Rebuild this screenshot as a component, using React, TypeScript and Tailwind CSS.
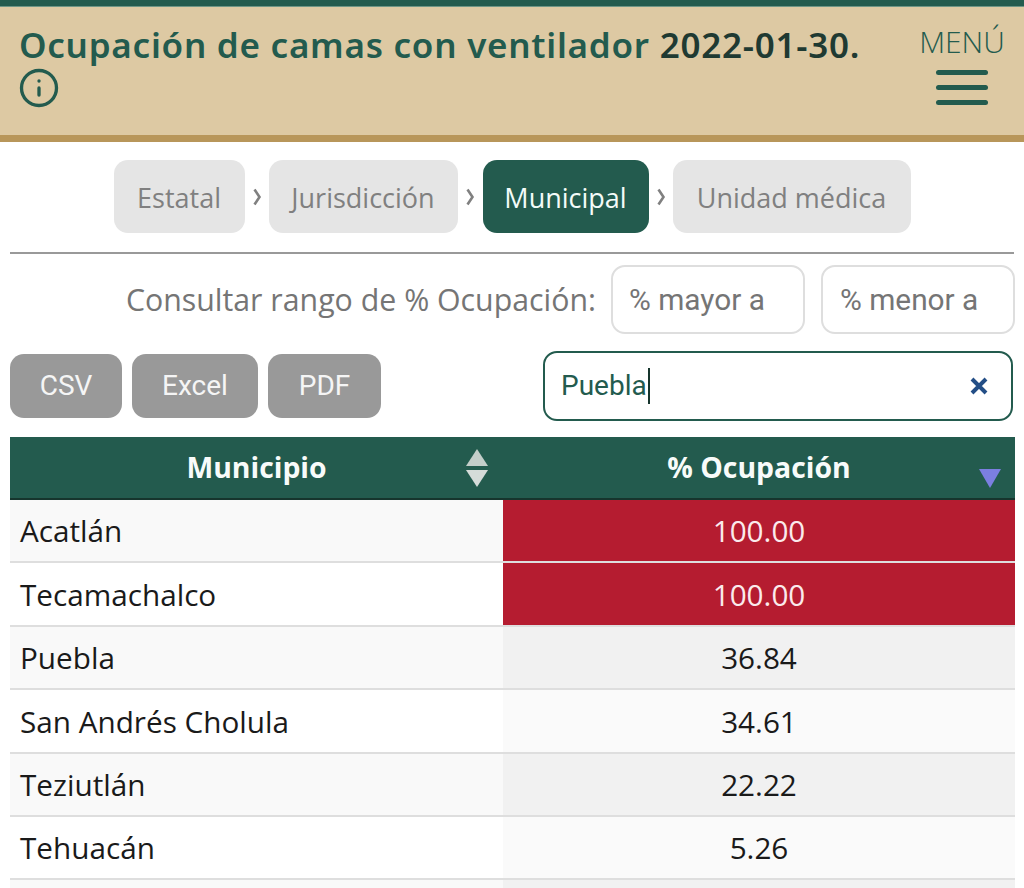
import { Info } from "lucide-react";

const rows = [
  { name: "Acatlán", value: "100.00", high: true },
  { name: "Tecamachalco", value: "100.00", high: true },
  { name: "Puebla", value: "36.84", high: false },
  { name: "San Andrés Cholula", value: "34.61", high: false },
  { name: "Teziutlán", value: "22.22", high: false },
  { name: "Tehuacán", value: "5.26", high: false },
  { name: "", value: "", high: false },
];

function Step({ label, active, width }: { label: string; active?: boolean; width: string }) {
  return (
    <div
      className={
        active
          ? `flex h-[73px] items-center justify-center rounded-[14px] bg-[#235b4e] pt-[3px] text-[#f4fbf8] ${width}`
          : `flex h-[73px] items-center justify-center rounded-[14px] bg-[#e5e5e5] pt-[3px] text-[#808080] ${width}`
      }
    >
      {label}
    </div>
  );
}

function Chevron({ wide }: { wide?: boolean }) {
  return (
    <svg className={wide ? "mr-[7px] ml-[6px] h-[20px] w-[12px] text-[#808080]" : "mx-[6px] h-[20px] w-[12px] text-[#808080]"} viewBox="0 0 12 20" fill="none">
      <path d="M3.5 2.5l5 7.5-5 7.5" stroke="currentColor" strokeWidth="2.6" />
    </svg>
  );
}

function ExportButton({ label, width }: { label: string; width: string }) {
  return (
    <div className={`flex h-[64px] items-center justify-center rounded-[14px] bg-[#999999] text-[28px] text-[#f5f5f5] ${width}`}>
      {label}
    </div>
  );
}

function SortArrows() {
  return (
    <svg className="h-[40px] w-[24px]" viewBox="0 0 24 40">
      <path d="M12 1l11 17H1z" fill="#c3cec9" />
      <path d="M12 39L1 22h22z" fill="#d5dcd9" />
    </svg>
  );
}

export default function App() {
  return (
    <div className="h-[888px] w-[1024px] overflow-hidden bg-white font-['Open_Sans',sans-serif]">
      <div className="h-[7px] border-b border-[#6d9586] bg-[#235b4e]" />
      <header className="flex h-[135px] border-b-[7px] border-[#b8965a] bg-[#ddc9a3] pr-[17px] pl-[19px]">
        <div className="w-[860px] pt-[16px]">
          <h1 className="text-[35px] leading-[44px] font-semibold tracking-[0.75px] whitespace-nowrap text-[#235b4e] font-['Noto_Sans',sans-serif]">
            Ocupación de camas con ventilador <span className="text-[#1f3a32]">2022-01-30.</span>
          </h1>
          <Info className="-ml-[1px] h-[42px] w-[42px] text-[#235b4e]" strokeWidth={1.9} />
        </div>
        <div className="ml-auto flex w-[90px] flex-col items-center pt-[18px]">
          <span className="text-[30px] leading-[34px] font-light text-[#235b4e]">MENÚ</span>
          <div className="mt-[11px] flex w-[52px] flex-col gap-[10px]">
            <div className="h-[5px] rounded-full bg-[#235b4e]" />
            <div className="h-[5px] rounded-full bg-[#235b4e]" />
            <div className="h-[5px] rounded-full bg-[#235b4e]" />
          </div>
        </div>
      </header>

      <div className="mx-[10px] flex h-[112px] items-start justify-center border-b-2 border-[#999999] pt-[18px] text-[27px]">
        <div className="flex items-center">
          <Step label="Estatal" width="w-[131px]" />
          <Chevron />
          <Step label="Jurisdicción" width="w-[189px]" />
          <Chevron wide />
          <Step label="Municipal" width="w-[166px]" active />
          <Chevron />
          <Step label="Unidad médica" width="w-[238px]" />
        </div>
      </div>

      <div className="mt-[11px] flex items-center justify-end pr-[9px]">
        <span className="mr-[15px] text-[30.3px] text-[#757575]">Consultar rango de % Ocupación:</span>
        <div className="flex h-[69px] w-[194px] items-center rounded-[14px] border-2 border-[#dedede] pt-[1px] pl-[16px] text-[29.8px] text-[#757575] font-['Roboto',sans-serif]">
          % mayor a
        </div>
        <div className="ml-[16px] flex h-[69px] w-[194px] items-center rounded-[14px] border-2 border-[#dedede] pt-[1px] pl-[17px] text-[29.8px] text-[#757575] font-['Roboto',sans-serif]">
          % menor a
        </div>
      </div>

      <div className="mt-[17px] flex items-center pr-[11px] pl-[10px] font-['Roboto',sans-serif]">
        <div className="flex gap-[10px]">
          <ExportButton label="CSV" width="w-[112px]" />
          <ExportButton label="Excel" width="w-[126px]" />
          <ExportButton label="PDF" width="w-[113px]" />
        </div>
        <div className="ml-auto flex h-[70px] w-[470px] items-center rounded-[14px] border-2 border-[#235b4e] pr-[22px] pl-[16px] text-[28px] text-[#235b4e]">
          <span>Puebla</span>
          <span className="ml-[1px] h-[36px] w-[2px] bg-[#16352d]" />
          <svg className="ml-auto h-[20px] w-[20px]" viewBox="0 0 20 20" fill="none">
            <path d="M3 3l14 14M17 3L3 17" stroke="#234e86" strokeWidth="4" />
          </svg>
        </div>
      </div>

      <div className="mt-[16px] mr-[9px] ml-[10px]">
        <div className="flex h-[63px] border-b-2 border-[#16352d] bg-[#235b4e] text-[28.4px] font-bold text-[#f8fbfa]">
          <div className="relative flex w-[493px] items-center justify-center">
            <span>Municipio</span>
            <div className="absolute top-[11px] right-[14px]">
              <SortArrows />
            </div>
          </div>
          <div className="relative flex flex-1 items-center justify-center">
            <span>% Ocupación</span>
            <svg className="absolute right-[14px] bottom-[10px] h-[20px] w-[22px]" viewBox="0 0 22 20">
              <path d="M11 20L0 1h22z" fill="#7b7fe0" />
            </svg>
          </div>
        </div>
        {rows.map((row, i) => (
          <div key={i} className="flex h-[63.4px] border-b-2 border-[#dedede] text-[29.7px] text-[#1a1a1a]">
            <div className={i % 2 === 0 ? "flex w-[493px] items-center bg-[#f9f9f9] pt-[2px] pl-[10px]" : "flex w-[493px] items-center bg-white pt-[2px] pl-[10px]"}>
              {row.name}
            </div>
            <div
              className={
                row.high
                  ? "flex flex-1 items-center justify-center bg-[#b51c30] pt-[2px] text-[#fbeaec]"
                  : i % 2 === 0
                    ? "flex flex-1 items-center justify-center bg-[#f1f1f1] pt-[2px]"
                    : "flex flex-1 items-center justify-center bg-[#fafafa] pt-[2px]"
              }
            >
              {row.value}
            </div>
          </div>
        ))}
      </div>
    </div>
  );
}
